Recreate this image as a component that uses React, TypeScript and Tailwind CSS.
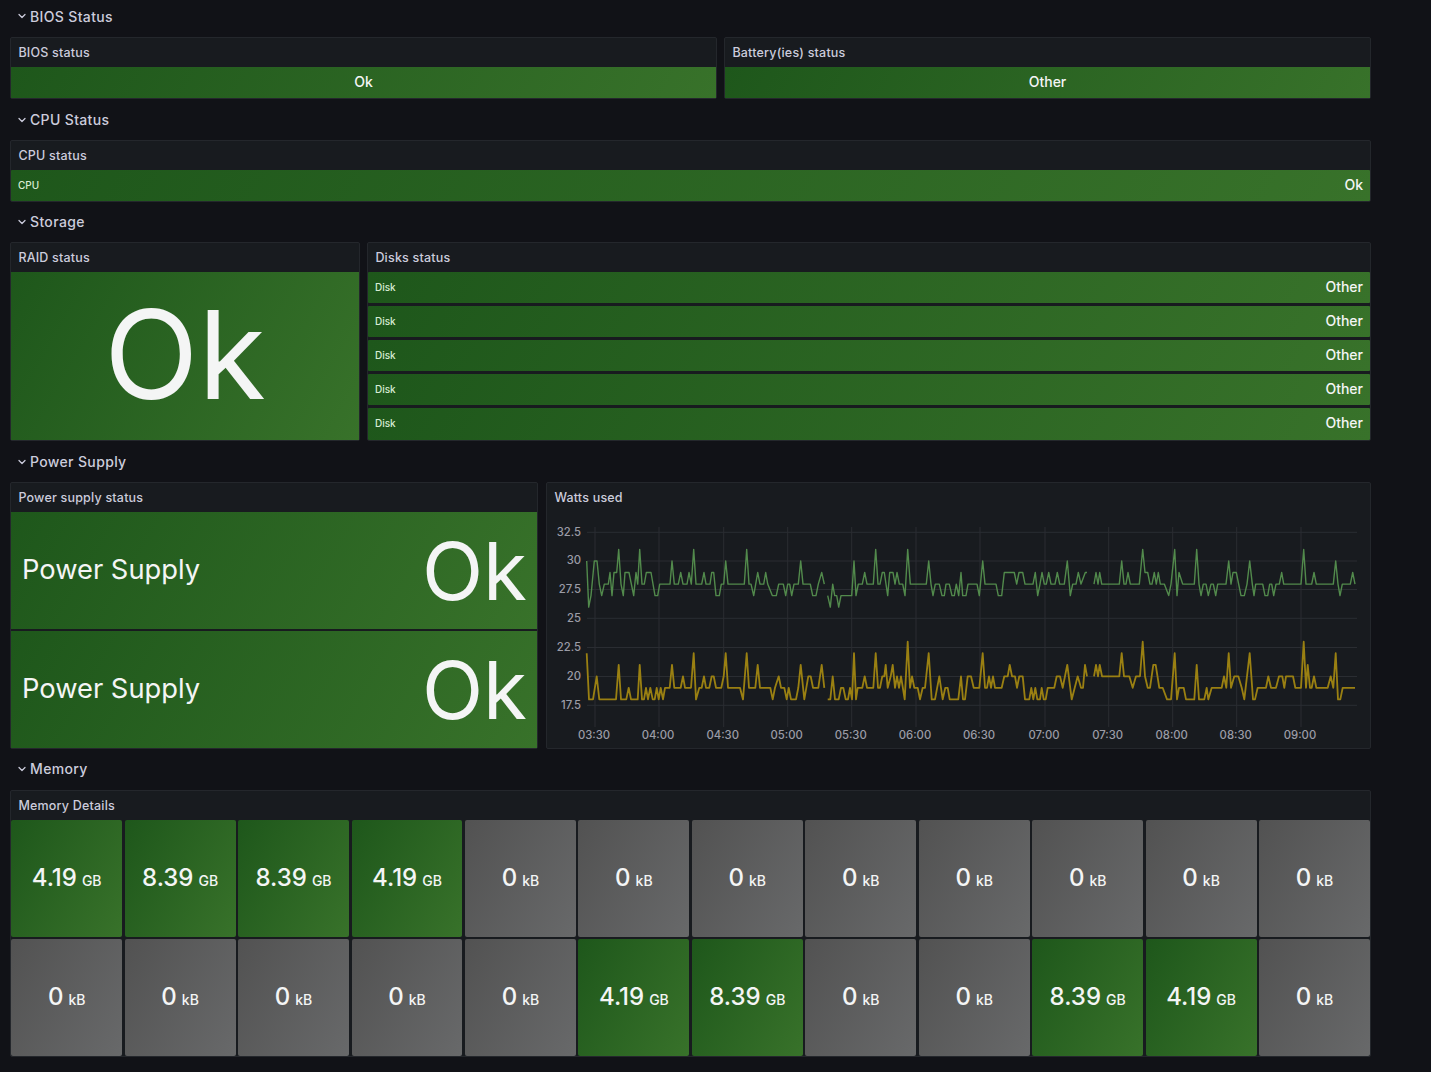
import type { ReactNode } from "react";
import { ChevronDown } from "lucide-react";

const GREEN = "bg-[linear-gradient(120deg,#1e571b,#38722a)]";
const GREY = "bg-[linear-gradient(120deg,#525252,#68696a)]";

function SectionTitle({ title, className }: { title: string; className: string }) {
  return (
    <div className={`flex items-center pl-[6px] text-[14px] font-medium tracking-[0.35px] text-[#ccccdc] ${className}`}>
      <ChevronDown size={12} strokeWidth={2.5} className="text-[#ccccdc]" />
      <span className="ml-[2px]">{title}</span>
    </div>
  );
}

function Panel({ title, className, children }: { title: string; className: string; children: ReactNode }) {
  return (
    <div className={`flex flex-col rounded-[2px] border border-[#24272c] bg-[#181b1f] ${className}`}>
      <div className="flex h-[29px] shrink-0 items-center pl-[7.4px] pt-[2px] text-[12.5px] font-medium tracking-[0.2px] text-[#ccccdc]">{title}</div>
      {children}
    </div>
  );
}

function Row({ name, value, className }: { name: string; value: string; className: string }) {
  return (
    <div className={`flex items-center justify-between rounded-[1px] px-[7px] text-[#f4f5f5] ${GREEN} ${className}`}>
      <span className="text-[10px] font-medium text-[#d8ecd4]">{name}</span>
      <span className="mb-[2px] text-[14px] font-medium">{value}</span>
    </div>
  );
}

function SupplyTile() {
  return (
    <div className={`flex h-[117px] items-center justify-between pl-[11px] pr-[10px] text-[#f4f5f5] ${GREEN}`}>
      <span className="mb-[1px] text-[27.3px]">Power Supply</span>
      <span className="text-[80px] leading-none">Ok</span>
    </div>
  );
}

type Pt = [number, number];

const toScreen = (list: Pt[], originX: number): Pt[] => list.map(([z, v]) => [originX + z / 3, 561 + (30 - v) * 11.53]);
const line = (pts: Pt[]) => pts.map(([x, y]) => `${(x - 546).toFixed(1)},${(y - 512).toFixed(1)}`).join(" ");

const greenA: Pt[] = [[137,30],[143,26],[150,27],[160,30],[168,30],[175,28],[182,27],[190,28],[202,28],[207,29],[213,27],[219,29],[227,29],[233,31],[240,28],[247,27],[252,29],[264,29],[278,27],[285,29],[290,28],[296,31],[303,28],[310,28],[316,29],[330,29],[342,27],[350,27],[356,28],[387,28],[393,30],[400,28],[412,28],[419,29],[426,28],[438,28],[444,29],[451,28],[458,31],[465,28],[482,28],[489,29],[495,28],[507,28],[512,29],[518,29],[525,27],[535,27],[541,28],[548,28],[554,30],[561,28],[610,28],[617,31],[624,28],[630,28],[638,27],[650,29],[657,28],[668,28],[674,29],[680,28],[694,27],[706,27],[713,28],[727,28],[734,27],[740,28],[746,28],[752,27],[759,28],[772,28],[779,30],[786,28],[808,28],[815,27],[825,27],[832,28],[842,29],[850,28]];
const greenB1: Pt[] = [[860,27],[868,26],[875,28],[881,27],[887,27],[893,26],[900,27],[932,27],[939,30],[945,27],[952,28],[964,28],[971,29],[978,28],[997,28],[1004,31],[1011,28],[1017,28],[1024,29],[1030,29],[1040,27],[1046,29],[1056,29],[1062,28],[1068,29],[1075,28],[1085,28],[1092,27],[1100,31],[1108,28],[1156,28],[1163,30],[1170,28],[1176,27],[1183,28],[1195,28],[1203,27],[1210,27],[1215,28],[1225,28],[1233,27],[1240,27],[1246,28],[1253,27],[1260,29]];
const greenB2: Pt[] = [[35,27],[45,27],[51,28],[78,28],[85,27],[95,30],[102,28],[135,28],[142,27],[152,27],[160,29],[190,29],[197,28],[204,29],[215,29],[222,28],[246,28],[253,29],[260,27],[267,28],[273,29],[280,28],[286,28],[293,29],[300,28],[312,28],[319,29],[326,28],[340,28],[349,30],[358,27],[365,28],[375,28],[382,29],[390,28],[403,29],[408,29]];
const greenC: Pt[] = [[429,28],[435,29],[441,28],[446,29],[452,28],[505,28],[512,30],[519,28],[525,28],[531,29],[538,28],[565,28],[575,31],[582,29],[590,29],[597,28],[603,28],[610,29],[616,28],[622,29],[628,28],[640,28],[653,27],[660,28],[671,31],[678,27],[684,29],[695,28],[730,28],[737,31],[744,28],[750,27],[757,28],[765,28],[772,27],[780,28],[787,28],[794,27],[800,28],[825,28],[833,30],[840,28],[846,29],[856,29],[870,27],[880,27],[888,28],[896,30],[904,28],[909,27],[914,28],[935,28],[942,27],[950,27],[956,28],[962,28],[968,27],[975,28],[985,28],[992,29],[998,28],[1050,28],[1058,31],[1065,28],[1082,28],[1089,29],[1096,28],[1147,28],[1154,30],[1161,28],[1167,27],[1174,28],[1198,28],[1205,29],[1212,28]];

const yellowA: Pt[] = [[137,22],[144,18],[156,18],[167,20],[175,18],[225,18],[233,21],[240,18],[256,18],[263,19],[270,18],[290,18],[296,21],[303,18],[309,18],[315,19],[321,18],[328,19],[335,18],[341,18],[347,19],[353,18],[359,19],[366,18],[372,19],[386,19],[393,21],[400,19],[419,19],[426,20],[432,19],[450,19],[458,22],[465,18],[475,19],[482,19],[489,20],[495,19],[505,19],[512,20],[518,20],[525,19],[541,19],[548,20],[554,22],[561,19],[597,19],[606,18],[617,22],[624,19],[643,19],[650,21],[657,19],[688,19],[695,18],[702,19],[713,20],[720,19],[730,19],[737,18],[743,19],[750,18],[765,18],[772,19],[779,21],[790,18],[802,20],[809,20],[816,19],[832,19],[842,21],[850,19]];
const yellowB1: Pt[] = [[860,18],[868,18],[875,20],[882,18],[893,18],[900,19],[907,19],[914,18],[921,18],[927,19],[933,18],[939,22],[945,18],[950,19],[964,19],[971,20],[978,19],[997,19],[1004,22],[1011,19],[1017,19],[1024,20],[1030,20],[1034,21],[1040,19],[1049,20],[1055,21],[1062,19],[1068,20],[1074,19],[1080,20],[1091,18],[1100,23],[1107,19],[1113,20],[1120,19],[1130,19],[1137,18],[1145,19],[1152,19],[1163,22],[1172,18],[1182,18],[1195,20],[1205,18],[1213,19],[1220,19],[1226,18],[1252,18],[1260,20]];
const yellowB2: Pt[] = [[36,18],[42,18],[50,20],[60,20],[68,19],[85,19],[95,22],[102,19],[108,19],[114,20],[120,19],[126,20],[132,19],[152,19],[160,20],[170,20],[176,21],[183,20],[192,20],[198,19],[205,20],[215,20],[222,18],[235,18],[241,19],[247,18],[253,19],[259,18],[267,18],[272,19],[278,18],[284,18],[290,19],[310,19],[317,20],[327,20],[335,19],[349,21],[362,18],[380,20],[390,19],[396,19],[402,21],[408,20]];
const yellowC: Pt[] = [[429,20],[435,21],[441,20],[446,21],[453,20],[505,20],[512,22],[519,20],[535,20],[545,19],[555,20],[567,20],[575,23],[582,20],[590,19],[597,19],[607,21],[614,21],[625,19],[635,19],[648,18],[660,18],[671,22],[678,18],[684,19],[698,19],[705,18],[730,18],[737,21],[744,18],[760,18],[767,19],[772,18],[782,19],[812,19],[819,20],[826,19],[833,22],[840,19],[850,20],[862,20],[872,19],[880,18],[896,22],[906,18],[912,18],[920,19],[945,19],[952,20],[960,19],[975,19],[984,20],[994,20],[1000,19],[1005,20],[1026,20],[1033,19],[1050,19],[1058,23],[1065,19],[1070,21],[1077,19],[1082,19],[1089,20],[1096,19],[1130,19],[1139,20],[1147,19],[1154,22],[1161,18],[1168,18],[1175,19],[1212,19]];

const greenLines = [
  toScreen(greenA, 540),
  [...toScreen(greenB1, 540), ...toScreen(greenB2, 950)],
  toScreen(greenC, 950),
];
const yellowLines = [
  toScreen(yellowA, 540),
  [...toScreen(yellowB1, 540), ...toScreen(yellowB2, 950)],
  toScreen(yellowC, 950),
];

const yTicks: [string, number][] = [["32.5", 532.3], ["30", 561], ["27.5", 589.5], ["25", 618.3], ["22.5", 647.5], ["20", 676.5], ["17.5", 705.3]];
const xTicks: [string, number][] = [["03:30", 594], ["04:00", 658], ["04:30", 722.7], ["05:00", 786.7], ["05:30", 850.7], ["06:00", 915], ["06:30", 979], ["07:00", 1044], ["07:30", 1107.7], ["08:00", 1171.7], ["08:30", 1235.7], ["09:00", 1300]];

function WattsChart() {
  return (
    <svg width={823} height={236} className="block">
      {yTicks.map(([label, y]) => (
        <g key={label}>
          <line x1={40} x2={810} y1={y - 512} y2={y - 512} stroke="#2a2d32" />
          <text x={34} y={y - 512 + 3.2} textAnchor="end" fontSize={11.3} fontWeight={500} fill="#9b9ca6">{label}</text>
        </g>
      ))}
      {xTicks.map(([label, x]) => (
        <g key={label}>
          <line x1={x - 546} x2={x - 546} y1={15} y2={215} stroke="#2a2d32" />
          <text x={x - 546 - 1} y={227} textAnchor="middle" fontSize={11.3} fontWeight={500} fill="#9b9ca6">{label}</text>
        </g>
      ))}
      {greenLines.map((pts, i) => (
        <polyline key={i} points={line(pts)} fill="none" stroke="#528a4c" strokeWidth={1.4} strokeLinejoin="round" />
      ))}
      {yellowLines.map((pts, i) => (
        <polyline key={i} points={line(pts)} fill="none" stroke="#9a8012" strokeWidth={1.8} strokeLinejoin="round" />
      ))}
    </svg>
  );
}

const memory: string[] = [
  "4.19 GB", "8.39 GB", "8.39 GB", "4.19 GB", "0 kB", "0 kB", "0 kB", "0 kB", "0 kB", "0 kB", "0 kB", "0 kB",
  "0 kB", "0 kB", "0 kB", "0 kB", "0 kB", "4.19 GB", "8.39 GB", "0 kB", "0 kB", "8.39 GB", "4.19 GB", "0 kB",
];

function MemoryTile({ value }: { value: string }) {
  const [num, unit] = value.split(" ");
  return (
    <div className={`flex items-center justify-center rounded-[2px] font-medium text-[#f4f5f5] ${unit === "GB" ? GREEN : GREY}`}>
      <span className="mb-[1px] text-[24px]">{num}</span>
      <span className="ml-[5px] mt-[3px] text-[14px]">{unit}</span>
    </div>
  );
}

export default function App() {
  return (
    <div className="min-h-[1072px] bg-[#111217] pl-[10px] font-[Inter,sans-serif]">
      <div className="w-[1361px]">
        <SectionTitle title="BIOS Status" className="h-[37px] pb-[5px]" />
        <div className="flex h-[62px] gap-[7px]">
          <Panel title="BIOS status" className="w-[707px]">
            <div className={`flex h-[31px] items-center justify-center pb-[2px] text-[14px] font-medium text-[#f4f5f5] ${GREEN}`}>Ok</div>
          </Panel>
          <Panel title="Battery(ies) status" className="w-[647px]">
            <div className={`flex h-[31px] items-center justify-center pb-[2px] text-[14px] font-medium text-[#f4f5f5] ${GREEN}`}>Other</div>
          </Panel>
        </div>

        <SectionTitle title="CPU Status" className="h-[41px]" />
        <Panel title="CPU status" className="h-[62px]">
          <Row name="CPU" value="Ok" className="h-[31px]" />
        </Panel>

        <SectionTitle title="Storage" className="h-[40px] pb-[1px]" />
        <div className="flex h-[199px] gap-[7px]">
          <Panel title="RAID status" className="w-[350px]">
            <div className={`flex h-[168px] items-center justify-center pb-[3px] text-[#f4f5f5] ${GREEN}`}>
              <span className="text-[123px] leading-none">Ok</span>
            </div>
          </Panel>
          <Panel title="Disks status" className="w-[1004px]">
            <div className="flex flex-col gap-[3px]">
              {[0, 1, 2, 3, 4].map((i) => (
                <Row key={i} name="Disk" value="Other" className={i === 4 ? "h-[32px] pb-[1px]" : "h-[31px]"} />
              ))}
            </div>
          </Panel>
        </div>

        <SectionTitle title="Power Supply" className="h-[41px]" />
        <div className="flex h-[267px] gap-[8px]">
          <Panel title="Power supply status" className="w-[528px]">
            <div className="flex flex-col gap-[2px]">
              <SupplyTile />
              <SupplyTile />
            </div>
          </Panel>
          <Panel title="Watts used" className="w-[825px]">
            <WattsChart />
          </Panel>
        </div>

        <SectionTitle title="Memory" className="h-[41px] pb-[2px]" />
        <Panel title="Memory Details" className="h-[267px]">
          <div className="grid h-[236px] grid-cols-12 grid-rows-2 gap-x-[2.5px] gap-y-[2px] pl-[0.2px]">
            {memory.map((value, i) => (
              <MemoryTile key={i} value={value} />
            ))}
          </div>
        </Panel>
      </div>
    </div>
  );
}
